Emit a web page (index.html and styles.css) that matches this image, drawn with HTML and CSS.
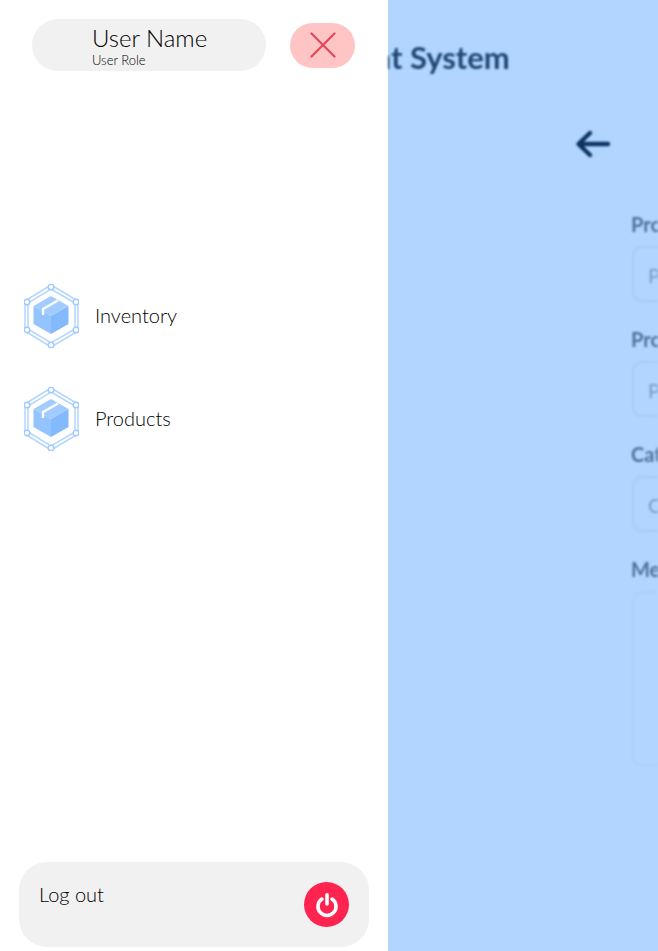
FILE: index.html
```html
<!DOCTYPE html>
<html lang="en">
<head>
    <meta charset="UTF-8">
    <meta name="viewport" content="width=device-width, initial-scale=1.0">
    <title>Inventory Management System</title>
    <link rel="stylesheet" href="styles.css">
</head>
<body>
    <aside class="sidebar">
        <div class="sidebar-top">
            <div class="user-pill">
                <span class="user-name">User Name</span>
                <span class="user-role">User Role</span>
            </div>
            <button class="close-btn" type="button" aria-label="Close">
                <svg viewBox="0 0 26 26" width="26" height="26" aria-hidden="true">
                    <path d="M1.500 1.500 24.500 24.500M24.500 1.500 1.500 24.500" stroke="#e2475a" stroke-width="2.200" stroke-linecap="round"/>
                </svg>
            </button>
        </div>

        <nav class="nav">
            <a class="nav-item">
                <svg class="nav-icon" viewBox="0 0 55 64" aria-hidden="true">
                    <use href="#box-icon"/>
                </svg>
                <span>Inventory</span>
            </a>
            <a class="nav-item">
                <svg class="nav-icon" viewBox="0 0 55 64" aria-hidden="true">
                    <use href="#box-icon"/>
                </svg>
                <span>Products</span>
            </a>
        </nav>

        <div class="logout">
            <span class="logout-text">Log out</span>
            <button class="power-btn" type="button" aria-label="Log out">
                <svg viewBox="0 0 24 24" width="26" height="26" aria-hidden="true">
                    <path d="M7.300 6.500a8.300 8.300 0 1 0 9.400 0" fill="none" stroke="#fff" stroke-width="3.300" stroke-linecap="round"/>
                    <path d="M12 2.500v8.500" stroke="#fff" stroke-width="3.300" stroke-linecap="round"/>
                </svg>
            </button>
        </div>
    </aside>

    <main class="main">
        <h1 class="page-title">Inventory Management System</h1>
        <div class="back-row">
            <svg class="back-arrow" viewBox="0 0 36 30" aria-hidden="true">
                <path d="M33 15H4M15 4 3.500 15 15 26" fill="none" stroke="#0b3360" stroke-width="4.400" stroke-linecap="round" stroke-linejoin="round"/>
            </svg>
        </div>
        <form class="product-form">
            <label class="field-label">Product Name</label>
            <div class="field-box">Product Name</div>
            <label class="field-label">Product Price</label>
            <div class="field-box">Price</div>
            <label class="field-label">Category</label>
            <div class="field-box">Category</div>
            <label class="field-label">Media</label>
            <div class="field-box field-box-media"></div>
        </form>
    </main>

    <svg class="icon-defs" aria-hidden="true">
        <symbol id="box-icon" viewBox="0 0 55 64">
            <path d="M27 1 54 17V47L27 63 1 47V17Z" fill="none" stroke="#b4d6ff" stroke-width="1.500"/>
            <path d="M27 5 51 19V45L27 59 4 45V19Z" fill="none" stroke="#b4d6ff" stroke-width="1.500"/>
            <path d="M27 12 44.500 22 27 32 9.500 22Z" fill="#a2ccff"/>
            <path d="M9.500 22 27 32V50L9.500 40Z" fill="#93c4ff"/>
            <path d="M27 32 44.500 22V40L27 50Z" fill="#84bafc"/>
            <path d="M34 16.500 19 25V31" fill="none" stroke="#fff" stroke-width="2.300"/>
            <g fill="#fff" stroke="#a0caff" stroke-width="1.400">
                <circle cx="27" cy="3" r="2.800"/>
                <circle cx="52" cy="18" r="2.800"/>
                <circle cx="52" cy="46" r="2.800"/>
                <circle cx="27" cy="61" r="2.800"/>
                <circle cx="3" cy="46" r="2.800"/>
                <circle cx="3" cy="18" r="2.800"/>
            </g>
        </symbol>
    </svg>
</body>
</html>
```

FILE: styles.css
```css
html, body {
    height: 100%;
}

body {
    display: flex;
    margin: 0;
    background-color: #b1d5ff;
    font-family: Lato, "Open Sans", sans-serif;
    overflow: hidden;
}

/* sliding menu */
.sidebar {
    flex: 0 0 388px;
    box-sizing: border-box;
    display: flex;
    flex-direction: column;
    padding: 19px 19px 4px 24px;
    background-color: #fff;
    color: #000;
}

.sidebar-top {
    display: flex;
    align-items: center;
    padding-left: 8px;
}

.user-pill {
    box-sizing: border-box;
    width: 234px;
    height: 52px;
    display: flex;
    flex-direction: column;
    padding: 4px 0 0 60px;
    border-radius: 26px;
    background-color: #f1f1f1;
}

.user-name {
    font-size: 24px;
    line-height: 29px;
    font-weight: 300;
}

.user-role {
    font-size: 13px;
    line-height: 16px;
    font-weight: 300;
}

.close-btn {
    width: 65px;
    height: 45px;
    display: flex;
    align-items: center;
    justify-content: center;
    margin-left: 24px;
    padding: 0;
    border: none;
    border-radius: 23px;
    background-color: #ffc5c5;
}

.nav {
    display: flex;
    flex-direction: column;
    gap: 39px;
    margin-top: 213px;
}

.nav-item {
    display: flex;
    align-items: center;
    gap: 16px;
    font-size: 20px;
    line-height: 24px;
    font-weight: 300;
}

.nav-item span {
    margin-bottom: 2px;
}

.nav-icon {
    width: 55px;
    height: 64px;
}

.logout {
    box-sizing: border-box;
    width: 350px;
    height: 85px;
    display: flex;
    justify-content: space-between;
    margin-top: auto;
    margin-left: -5px;
    padding: 20px 20px 0 20px;
    border-radius: 28px;
    background-color: #f1f1f1;
    font-size: 20px;
    font-weight: 300;
}

.logout-text {
    line-height: 24px;
}

.power-btn {
    width: 45px;
    height: 45px;
    display: flex;
    align-items: center;
    justify-content: center;
    padding: 0;
    border: none;
    border-radius: 50%;
    background-color: #ff244f;
}

/* page behind the open menu, cut off by the menu edge */
.main {
    flex: 1;
    min-width: 0;
    overflow: hidden;
    filter: blur(1.2px);
    color: #1e4672;
}

.page-title {
    margin: 0;
    margin-left: -307px;
    padding-top: 39px;
    font-size: 31px;
    line-height: 36px;
    font-weight: 700;
    white-space: nowrap;
}

.back-row {
    padding-top: 50px;
    padding-left: 187px;
    height: 30px;
    margin-top: 4px;
}

.back-arrow {
    display: block;
    width: 36px;
    height: 30px;
}

.product-form {
    width: 420px;
    margin-top: 54px;
    margin-left: 243px;
}

.field-label {
    display: block;
    height: 23px;
    margin-bottom: 10px;
    font-size: 20px;
    line-height: 23px;
    font-weight: 700;
    color: #4e7099;
    white-space: nowrap;
}

.field-box {
    box-sizing: border-box;
    height: 56px;
    margin-left: 1px;
    margin-bottom: 26px;
    padding: 15px 14px;
    border: 2px solid #a5cbf8;
    border-radius: 10px;
    font-size: 20px;
    color: #7399c6;
    white-space: nowrap;
}

.field-box-media {
    height: 175px;
    border-style: dotted;
}

.icon-defs {
    display: none;
}
```
